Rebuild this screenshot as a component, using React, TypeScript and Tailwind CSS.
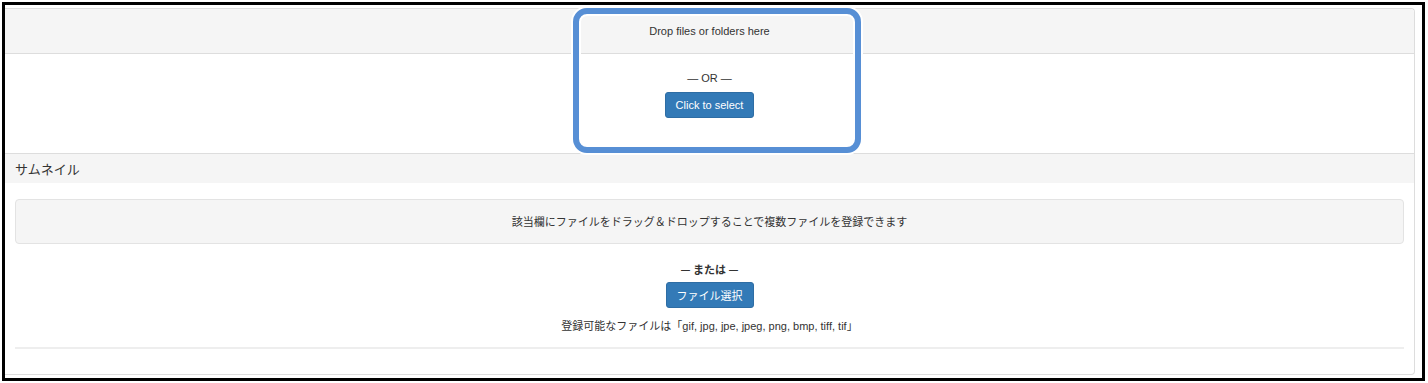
import React from "react";

const sans = "font-['Liberation_Sans','Noto_Sans_CJK_JP',sans-serif]";
const jp = "font-['Noto_Sans_CJK_JP','Liberation_Sans',sans-serif]";

const App: React.FC = () => {
  return (
    <div className={`w-[1428px] h-[383px] bg-white pt-[2px] pl-[2px] text-[#333] ${sans}`}>
      <div className="relative w-[1423px] h-[379px] border-[3px] border-black pt-[3px] pr-[7px] pb-[3px]">
        {/* upload panel */}
        <div className="border-t border-r border-[#ddd] rounded-tr-[4px] bg-white">
          <div className="h-[45px] bg-[#f5f5f5] border-b border-[#ddd] rounded-tr-[4px] flex items-center justify-center text-[11px]">
            Drop files or folders here
          </div>
          <div className="h-[99px] flex flex-col items-center pt-[16px]">
            <p className="text-[11px] leading-[16px]">— OR —</p>
            <button className="mt-[6px] h-[26px] px-[10px] bg-[#337ab7] border border-[#2e6da4] rounded-[3px] text-white text-[11px]">
              Click to select
            </button>
          </div>
        </div>

        {/* thumbnail panel */}
        <div className={`h-[222px] border-t border-r border-b border-[#ddd] rounded-br-[4px] ${jp}`}>
          <div className="h-[29px] bg-[#f5f5f5] flex items-center pl-[10px] text-[13px]">サムネイル</div>
          <div className="px-[10px] pt-[16px]">
            <div className="h-[45px] bg-[#f5f5f5] border border-[#e3e3e3] rounded-[4px] flex items-center justify-center text-[11px]">
              該当欄にファイルをドラッグ＆ドロップすることで複数ファイルを登録できます
            </div>
            <div className="flex flex-col items-center pt-[17px]">
              <p className="text-[11px] leading-[16px] font-bold">— または —</p>
              <button className="mt-[5px] h-[26px] px-[10px] bg-[#337ab7] border border-[#2e6da4] rounded-[3px] text-white text-[11px]">
                ファイル選択
              </button>
              <p className="mt-[9px] text-[11px] leading-[16px]">
                登録可能なファイルは「<span className={sans}>gif, jpg, jpe, jpeg, png, bmp, tiff, tif</span>」
              </p>
            </div>
            <hr className="mt-[13px] border-t-2 border-[#eee]" />
          </div>
        </div>

        {/* highlight annotation */}
        <div className="absolute left-[568px] top-[3px] w-[288px] h-[145px] border-[6px] border-[#578fd5] rounded-[14px] shadow-[inset_0_0_0_2px_#fff,0_0_0_2px_#fff]" />
      </div>
    </div>
  );
};

export default App;
